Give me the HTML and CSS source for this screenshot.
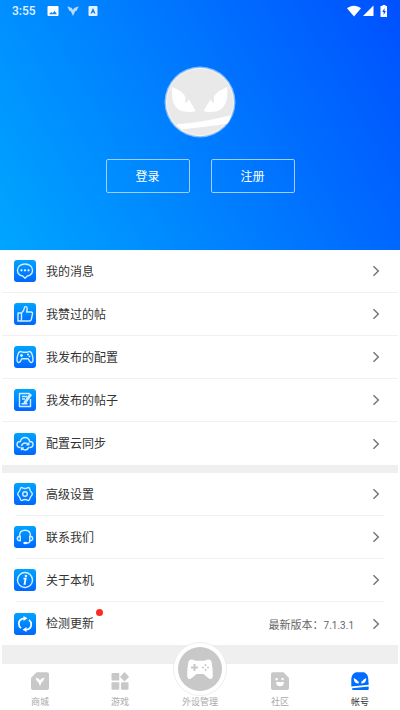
FILE: index.html
```html
<!DOCTYPE html>
<html lang="zh-CN">
<head>
<meta charset="utf-8">
<meta name="viewport" content="width=device-width, initial-scale=1">
<title>帐号</title>
<link rel="stylesheet" href="styles.css">
</head>
<body>
<svg width="0" height="0" class="defs" aria-hidden="true">
  <defs>
    <linearGradient id="tile" x1="0" y1="0" x2="0" y2="1"><stop offset="0" stop-color="#00a4ff"/><stop offset="1" stop-color="#0066ff"/></linearGradient>
    <symbol id="chevron" viewBox="0 0 8 12"><path d="M1.500 1.200 6.300 6 1.500 10.800" fill="none" stroke="#777" stroke-width="1.500"/></symbol>
  </defs>
</svg>
<div class="app">
  <header class="hero">
    <div class="status">
      <span class="clock">3:55</span>
      <svg class="s-note" viewBox="0 0 12 12"><path fill="#fff" fill-rule="evenodd" d="M1.500 1h9a1 1 0 0 1 1 1v8a1 1 0 0 1-1 1h-9a1 1 0 0 1-1-1V2a1 1 0 0 1 1-1zM2 9.300h8L7.600 6 5.600 8.300 4.200 7z"/></svg>
      <svg class="s-note" viewBox="0 0 12 12"><path fill="#b5dcff" d="M.3 1.200 4.800 3 6 5l1.200-2 4.500-1.800L9.500 6H8.300L6 11 3.700 6H2.500z"/></svg>
      <svg class="s-note" viewBox="0 0 12 12"><path fill="#e4f2ff" fill-rule="evenodd" d="M2.500 1h7a1 1 0 0 1 1 1v8a1 1 0 0 1-1 1h-7a1 1 0 0 1-1-1V2a1 1 0 0 1 1-1zM6 3 3.500 8.500h1.300L5.300 7.500h1.400l.5 1h1.300z"/></svg>
      <span class="grow"></span>
      <svg class="s-wifi" viewBox="0 0 14 12"><path fill="#fff" d="M7 11.500 0 3.200C4-.2 10-.2 14 3.200z"/></svg>
      <svg class="s-cell" viewBox="0 0 11 12"><path fill="#fff" d="M0 11 10.500.500V11z"/></svg>
      <svg class="s-batt" viewBox="0 0 8 12"><path fill="#fff" fill-rule="evenodd" d="M2.500 0h3v1H7v11H1a.5.500 0 0 1-.5-.5V1h2zM4.500 3 2.300 7h1.400v3l2.200-4H4.500z"/></svg>
    </div>
    <svg class="avatar" viewBox="0 0 72 72" role="img" aria-label="头像">
      <circle cx="36" cy="36" r="35.500" fill="#fff" opacity=".5"/>
      <circle cx="36" cy="36" r="34.200" fill="#f6f1ec"/>
      <circle cx="36" cy="36" r="33" fill="#e9e9e9"/>
      <path fill="#fff" d="M8 21c5 2 11 5 13.300 9.500V37l2-1 1.500-2.800L31.700 45c-3 1-7.500 1.300-12 .5C10 43.500 7 34 8 21zM63.300 21c-5 2-11 5-13.300 9.500V37l-2-1-1.500-2.800L39.600 45c3 1 7.500 1.300 12 .5C61.300 43.500 64.300 34 63.300 21zM12.500 58C31 57.500 49 53.500 67.500 49c-1 3.500-2.500 6.500-4.500 9-15 2-30 3.500-45 5.500-2-1.500-4-3.500-5.500-5.500z"/>
    </svg>
    <div class="actions">
      <button type="button">登录</button>
      <button type="button">注册</button>
    </div>
  </header>

  <main>
    <nav class="group">
      <a class="row" href="#"><svg class="tile" viewBox="0 0 22 22"><rect width="22" height="22" rx="3" fill="url(#tile)"/><path class="ln" d="M11 4c4.500 0 7.500 2.700 7.500 6.200 0 3-2.300 5.200-5.200 5.800L11 18.300 8.700 16c-2.900-.6-5.200-2.800-5.200-5.800C3.500 6.700 6.500 4 11 4z"/><g fill="#fff"><circle cx="7.500" cy="10.300" r="1.100"/><circle cx="11" cy="10.300" r="1.100"/><circle cx="14.500" cy="10.300" r="1.100"/></g></svg><span class="label">我的消息</span><svg class="arrow"><use href="#chevron"/></svg></a>
      <a class="row" href="#"><svg class="tile" viewBox="0 0 22 22"><rect width="22" height="22" rx="3" fill="url(#tile)"/><path class="ln" d="M4 10h3.500v8H4zM7.500 10c2-1.500 2.700-3 3-5.500.2-1.300 2.300-1.200 2.600.5.200 1.300-.1 2.700-.5 4h4.400c1.100 0 1.700.8 1.500 1.800l-1.200 5.700c-.3 1-.8 1.500-1.800 1.500h-8"/></svg><span class="label">我赞过的帖</span><svg class="arrow"><use href="#chevron"/></svg></a>
      <a class="row" href="#"><svg class="tile" viewBox="0 0 22 22"><rect width="22" height="22" rx="3" fill="url(#tile)"/><path class="ln" d="M6.500 5.500c1.200 0 1.500.8 2.500.8h4c1 0 1.300-.8 2.500-.8 2.400 0 3.500 5.500 3.500 8.500 0 3.200-2.500 3-3.500 1.200l-1.200-2.400H7.700l-1.200 2.400C5.500 17 3 17.200 3 14c0-3 1.100-8.500 3.500-8.500zM6 9.500h3M7.500 8v3"/><g fill="#fff"><circle cx="14" cy="8.500" r=".9"/><circle cx="15.500" cy="10.300" r=".9"/></g></svg><span class="label">我发布的配置</span><svg class="arrow"><use href="#chevron"/></svg></a>
      <a class="row" href="#"><svg class="tile" viewBox="0 0 22 22"><rect width="22" height="22" rx="3" fill="url(#tile)"/><path class="ln" d="M16.500 10v7.500h-11v-13h10M8 7.500h5M8 10h3M17.500 5.500l-6 8.500-1.500 1 .3-1.800 6-8.500M7.500 14.800h6"/></svg><span class="label">我发布的帖子</span><svg class="arrow"><use href="#chevron"/></svg></a>
      <a class="row" href="#"><svg class="tile" viewBox="0 0 22 22"><rect width="22" height="22" rx="3" fill="url(#tile)"/><path class="ln" d="M6.500 14.500c-2 0-3.500-1.300-3.500-3s1.500-3 3.300-3C7 6 8.700 4.500 11 4.500s4.200 1.500 4.700 4c1.900 0 3.300 1.300 3.300 3s-1.500 3-3.500 3M7.500 13c.5-2 2-3 3.800-3 1.500 0 2.500.7 3.200 1.700M14.700 14c-.5 2-2 3-3.700 3-1.500 0-2.700-.7-3.300-2M14.800 9.500v2.300h-2.300M7.500 17.300V15h2.300"/></svg><span class="label">配置云同步</span><svg class="arrow"><use href="#chevron"/></svg></a>
    </nav>
    <nav class="group inset">
      <a class="row" href="#"><svg class="tile" viewBox="0 0 22 22"><rect width="22" height="22" rx="3" fill="url(#tile)"/><path class="ln" d="M7.500 4.500c1 0 1.500 1 3.500 1s2.500-1 3.500-1c1.200 0 1.200 2 2 3.500.8 1.300 1.800 1.800 1.800 3s-1 1.700-1.800 3c-.8 1.500-.8 3.500-2 3.500-1 0-1.500-1-3.500-1s-2.500 1-3.500 1c-1.200 0-1.200-2-2-3.500-.8-1.300-1.800-1.800-1.800-3s1-1.700 1.800-3c.8-1.500.8-3.500 2-3.500z"/><circle class="ln" cx="11" cy="11" r="2.300"/></svg><span class="label">高级设置</span><svg class="arrow"><use href="#chevron"/></svg></a>
      <a class="row" href="#"><svg class="tile" viewBox="0 0 22 22"><rect width="22" height="22" rx="3" fill="url(#tile)"/><path class="ln" d="M5.500 10c0-3.500 2.300-5.700 5.500-5.700s5.500 2.200 5.500 5.700M6.300 10.200v4.600c-2 0-3-1-3-2.300s1-2.300 3-2.300zM15.700 10.200v4.600c2 0 3-1 3-2.300s-1-2.300-3-2.300zM16.300 14.800c-.6 1.500-1.800 2.400-4 2.400"/><ellipse cx="11.200" cy="17" rx="1.900" ry="1.200" fill="#fff"/></svg><span class="label">联系我们</span><svg class="arrow"><use href="#chevron"/></svg></a>
      <a class="row" href="#"><svg class="tile" viewBox="0 0 22 22"><rect width="22" height="22" rx="3" fill="url(#tile)"/><circle class="ln" cx="11" cy="11" r="7.500"/><path d="M9.500 9.700h2.200l-1.200 5.300h1.300" fill="none" stroke="#fff" stroke-width="1.700"/><circle cx="11.900" cy="7" r="1.200" fill="#fff"/></svg><span class="label">关于本机</span><svg class="arrow"><use href="#chevron"/></svg></a>
      <a class="row" href="#"><svg class="tile" viewBox="0 0 22 22"><rect width="22" height="22" rx="3" fill="url(#tile)"/><path d="M10 5.300c-3.300.4-5.200 2.900-5.200 5.500 0 1.800.8 3.300 2.200 4.400M12 16.700c3.300-.4 5.200-2.900 5.200-5.500 0-1.800-.8-3.300-2.200-4.400" fill="none" stroke="#fff" stroke-width="1.700"/><path fill="#fff" d="M9.500 3v5l4-2.700zM12.500 14v5l-4-2.300z"/></svg><span class="label update">检测更新</span><span class="version">最新版本：<span class="number">7.1.3.1</span></span><svg class="arrow"><use href="#chevron"/></svg></a>
    </nav>
  </main>

  <nav class="tabs">
    <a href="#"><svg class="tab-icon" viewBox="0 0 18 18"><path fill="#c8c8c8" d="M5.500.3H16a2 2 0 0 1 2 2V16a2 2 0 0 1-2 2H2a2 2 0 0 1-2-2V6z"/><path fill="#fff" d="m4.500 5.500 3.300 1.200L9 8.500l1.200-1.800 3.300-1.200-1.500 4-1.200.3L9 14 7.200 9.800 6 9.500z"/></svg>商城</a>
    <a href="#"><svg class="tab-icon" viewBox="0 0 18 18"><g fill="#c8c8c8"><rect x=".5" y="1" width="7.800" height="7.500" rx="1"/><rect x=".5" y="10.200" width="7.800" height="7.500" rx="1"/><rect x="10" y="10.200" width="7.500" height="7.500" rx="1"/><path d="m13.500 0 4.600 4.800-4.600 4.700L9 4.800z"/></g></svg>游戏</a>
    <a href="#" class="center"><svg class="pad" viewBox="0 0 54 54"><circle cx="27" cy="27" r="26.500" fill="#fff" stroke="#eee"/><circle cx="27" cy="27" r="22" fill="#c8c8c8"/><path fill="#fff" d="M18.500 17.500c2 0 2.500 1.200 4.500 1.200h8c2 0 2.500-1.200 4.500-1.200 2.300 0 3 1.500 3.400 4 .6 4 .9 7.500.9 12 0 3.800-2.600 4.500-4.600 2.500L30.500 32h-7l-4.700 4c-2 2-4.600 1.300-4.600-2.500 0-4.500.3-8 .9-12 .4-2.500 1.100-4 3.400-4z"/><path stroke="#c8c8c8" stroke-width="2" d="M18 25.500h7M21.500 22v7"/><g fill="#c8c8c8"><circle cx="32.500" cy="23" r="1"/><circle cx="32.500" cy="28" r="1"/><circle cx="30" cy="25.500" r="1"/><circle cx="35" cy="25.500" r="1"/></g></svg>外设管理</a>
    <a href="#"><svg class="tab-icon" viewBox="0 0 18 18"><path fill="#c8c8c8" d="M2 .3h10.500L18 6v10a2 2 0 0 1-2 2H2a2 2 0 0 1-2-2V2.300a2 2 0 0 1 2-2z"/><path fill="#fff" d="M4.500 6h2.200v2.300H4.500zM10.500 6h2.200v2.300h-2.200zM5 10h8c0 2.700-1.500 4.300-4 4.300S5 12.700 5 10z"/></svg>社区</a>
    <a href="#" class="active"><svg class="tab-icon" viewBox="0 0 18 18"><path fill="#006dff" d="M5 .3h8c2.500 1 4 3.200 4.200 6l.5 6.500L.3 14.500V7C.5 3.800 2 1.500 5 .3zM1 16.300l16.700-1.800V17q0 1-1 1H2q-1 0-1-1.700z"/><path fill="#fff" d="M2.700 6 6 8l.3 1.200.7-.7 1 2.800c-2.800.6-5.100-.8-5.300-5.300zM15.300 6 12 8l-.3 1.200-.7-.7-1 2.800c2.800.6 5.100-.8 5.300-5.300z"/></svg>帐号</a>
  </nav>
</div>
</body>
</html>
```
FILE: styles.css
```css
* { box-sizing: border-box; }

body {
  margin: 0;
  background: #fff;
  color: #333;
  font-family: Roboto, "Noto Sans CJK SC", sans-serif;
  font-size: 12px;
}

a { color: inherit; text-decoration: none; }
svg { display: block; flex: none; }
.defs { position: absolute; }

.app {
  min-height: 100vh;
  display: flex;
  flex-direction: column;
}

.hero {
  display: flex;
  flex-direction: column;
  align-items: center;
  padding-bottom: 57px;
  background: linear-gradient(60deg, #00a6ff, #0050ff);
}

.status {
  align-self: stretch;
  display: flex;
  align-items: center;
  height: 22px;
  padding: 0 12px;
  color: #e4f2ff;
}
.clock { width: 35px; font-size: 12px; font-weight: 500; }
.s-note { width: 12px; height: 12px; margin-right: 8px; }
.grow { flex: 1; }
.s-wifi { width: 14px; height: 12px; }
.s-cell { width: 11px; height: 12px; margin: 0 6px 0 2px; }
.s-batt { width: 8px; height: 12px; }

.avatar { width: 72px; height: 72px; margin: 44px 0 21px; }

.actions { display: flex; gap: 21px; }
.actions button {
  width: 84px;
  height: 34px;
  padding: 0 0 2px;
  border: 1px solid #9fceff;
  border-radius: 2px;
  background: transparent;
  color: #fff;
  font: inherit;
}

main {
  flex: 1;
  margin: 0 2px;
  background: #efefef;
}

.group { background: #fff; }
.group + .group { margin-top: 8px; }

.row {
  display: flex;
  align-items: center;
  height: 43px;
  padding: 0 18px 0 12px;
}
.row:not(:last-child) { border-bottom: 1px solid #f1f1f1; }
.inset .row { margin-left: 14px; padding-left: 0; }
.inset .row:not(:last-child) { margin-right: 14px; padding-right: 4px; }
.inset .tile { margin-left: -2px; }

.tile { width: 22px; height: 22px; }
.ln {
  fill: none;
  stroke: #d5edff;
  stroke-width: 1.4;
  stroke-linejoin: round;
}
.label { margin-left: 10px; padding-bottom: 2px; }
.arrow { width: 8px; height: 12px; margin-left: auto; }

.update { position: relative; }
.update::after {
  content: "";
  position: absolute;
  top: -5px;
  right: -9px;
  width: 7px;
  height: 7px;
  border-radius: 50%;
  background: #ff2a24;
}
.version { margin-left: auto; color: #666; font-size: 11px; }
.number { font-size: 10px; }
.version + .arrow { margin-left: 18px; }

.tabs {
  display: grid;
  grid-template-columns: repeat(5, 1fr);
  height: 46px;
  background: #fff;
  color: #aaa;
  font-size: 9px;
  line-height: 12px;
}
.tabs a {
  position: relative;
  display: flex;
  flex-direction: column;
  align-items: center;
  justify-content: flex-end;
  gap: 6px;
  padding-bottom: 2px;
}
.tabs .active { color: #333; }
.tab-icon { width: 18px; height: 18px; }
.pad {
  position: absolute;
  bottom: 14px;
  width: 54px;
  height: 54px;
}
```
